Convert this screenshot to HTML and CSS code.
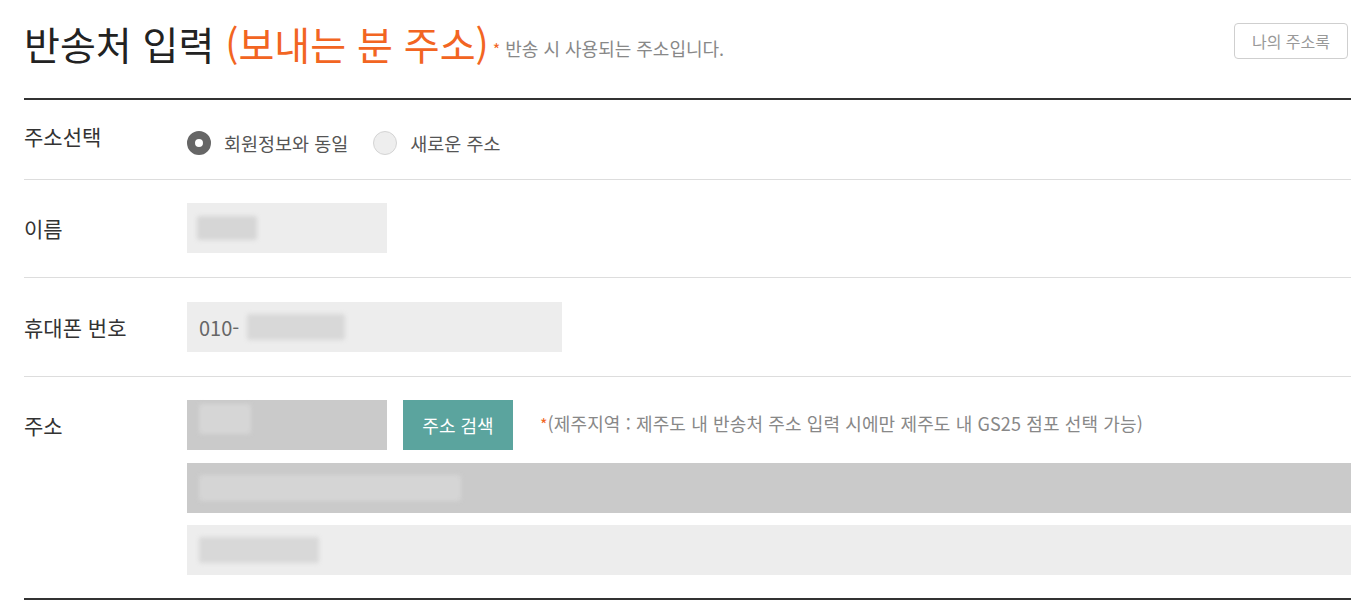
FILE: index.html
```html
<!DOCTYPE html>
<html lang="ko">
<head>
<meta charset="utf-8">
<title>반송처 입력</title>
<link rel="stylesheet" href="styles.css">
</head>
<body>
<div class="page">
  <header class="head">
    <h2 class="title">반송처 입력 <span class="accent">(보내는 분 주소)</span></h2>
    <p class="subtitle"><span class="star">*</span> 반송 시 사용되는 주소입니다.</p>
    <button class="book-btn" type="button">나의 주소록</button>
  </header>

  <div class="row row-select">
    <div class="label label-select">주소선택</div>
    <div class="radios">
      <label class="radio"><span class="dot dot-on"></span>회원정보와 동일</label>
      <label class="radio"><span class="dot"></span>새로운 주소</label>
    </div>
  </div>

  <div class="row">
    <div class="label">이름</div>
    <div class="field field-name">
      <span class="blur blur-name"></span>
    </div>
  </div>

  <div class="row row-phone">
    <div class="label">휴대폰 번호</div>
    <div class="field field-phone">
      <span class="val">010-</span><span class="blur blur-phone"></span>
    </div>
  </div>

  <div class="row row-last">
    <div class="label">주소</div>
    <div class="addr">
      <div class="addr-line">
        <div class="field field-zip dis"><span class="blur blur-zip"></span></div>
        <button class="search-btn" type="button">주소 검색</button>
        <p class="note"><span class="star">*</span>(제주지역 : 제주도 내 반송처 주소 입력 시에만 제주도 내 GS25 점포 선택 가능)</p>
      </div>
      <div class="field field-full dis"><span class="blur blur-addr1"></span></div>
      <div class="field field-full"><span class="blur blur-addr2"></span></div>
    </div>
  </div>
</div>
</body>
</html>
```

FILE: styles.css
```css
* { box-sizing: border-box; }
html, body { margin: 0; padding: 0; background: #fff; }
body {
  font-family: "Noto Sans CJK KR", "Noto Sans", sans-serif;
  color: #333;
}
.page { padding-left: 24px; }

.head {
  display: flex;
  align-items: flex-start;
  height: 100px;
  border-bottom: 2px solid #333;
}
.title {
  margin: 15px 0 0;
  font-size: 39px;
  font-weight: 400;
  line-height: 56px;
  color: #222;
  white-space: nowrap;
}
.accent { color: #f26522; }
.subtitle {
  margin: 34px 0 0 4px;
  font-size: 18px;
  line-height: 28px;
  color: #888;
  white-space: nowrap;
}
.star { color: #f26522; font-size: 16px; }
.book-btn {
  margin: 23px 3px 0 auto;
  width: 114px;
  height: 36px;
  border: 1px solid #cfcfcf;
  border-radius: 4px;
  background: #fff;
  color: #999;
  font-family: inherit;
  font-size: 16px;
  padding: 0;
}

.row {
  display: flex;
  padding: 23px 0 24px;
  border-bottom: 1px solid #ddd;
}
.row-phone { padding-top: 24px; }
.row-last { border-bottom: 2px solid #333; padding-bottom: 23px; }
.row-select { padding: 24px 0 24px; }

.label {
  width: 163px;
  flex: none;
  font-size: 21px;
  line-height: 50px;
  color: #333;
}
.label-select { line-height: 24px; }

.radios {
  display: flex;
  align-items: center;
  gap: 25px;
  margin-top: 7px;
  height: 24px;
}
.radio {
  display: flex;
  align-items: center;
  gap: 13px;
  font-size: 18.5px;
  color: #555;
}
.dot {
  width: 24px;
  height: 24px;
  border-radius: 50%;
  background: #eee;
  border: 1px solid #d4d4d4;
  flex: none;
}
.dot-on {
  background: #fff;
  border: 8px solid #666;
}

.field {
  height: 50px;
  background: #ededed;
  display: flex;
  align-items: center;
  padding-left: 12px;
}
.field.dis { background: #cacaca; }
.field-name { width: 200px; }
.field-phone { width: 375px; }
.field-zip { width: 200px; }
.field-full { width: 100%; }
.val { font-size: 20px; color: #666; }

.blur {
  display: block;
  height: 24px;
  border-radius: 3px;
  background: #d9d9d9;
  filter: blur(2px);
}
.blur-name { width: 60px; background: #d6d6d6; margin-left: -2px; }
.blur-phone { width: 98px; height: 26px; background: #d8d8d8; margin-left: 8px; }
.blur-zip { width: 52px; height: 30px; background: #d6d6d6; margin-top: -12px; }
.blur-addr1 { width: 262px; height: 26px; background: #d5d5d5; }
.blur-addr2 { width: 120px; height: 26px; background: #d8d8d8; }

.addr { flex: 1; display: flex; flex-direction: column; gap: 13px; }
.addr .field-full + .field-full { margin-top: -1px; }
.addr-line { display: flex; align-items: center; }
.search-btn {
  margin-left: 16px;
  width: 110px;
  height: 50px;
  border: 0;
  background: #5ba49e;
  color: #fff;
  font-family: inherit;
  font-size: 18px;
  padding: 0;
}
.note {
  margin: 0 0 0 27px;
  font-size: 18px;
  color: #888;
  white-space: nowrap;
  align-self: flex-start;
  line-height: 46px;
  letter-spacing: 0.12px;
}
```
